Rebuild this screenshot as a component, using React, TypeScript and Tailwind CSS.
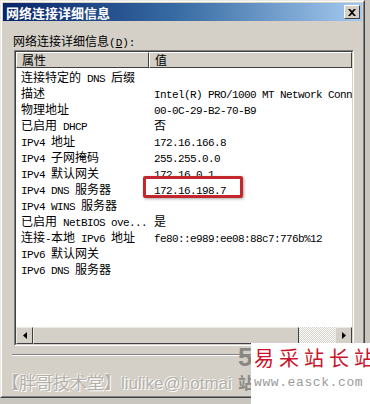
import React from "react";

const CJK = "'Noto Sans CJK SC', 'Liberation Sans', sans-serif";

function Mixed({ text }: { text: string }) {
  const parts = text.match(/[\x00-\x7F]+|[^\x00-\x7F]+/g) || [];
  return (
    <>
      {parts.map((p, i) =>
        /^[\x00-\x7F]+$/.test(p) ? (
          <span
            key={i}
            className="text-[11px] leading-[14px] tracking-[-0.6px] whitespace-pre"
            style={{ fontFamily: "'Liberation Mono', monospace" }}
          >
            {p}
          </span>
        ) : (
          <span key={i} className="text-[12px] leading-[14px] whitespace-pre" style={{ fontFamily: CJK }}>
            {p}
          </span>
        )
      )}
    </>
  );
}

const rows: [string, string][] = [
  ["连接特定的 DNS 后缀", ""],
  ["描述", "Intel(R) PRO/1000 MT Network Connection"],
  ["物理地址", "00-0C-29-B2-70-B9"],
  ["已启用 DHCP", "否"],
  ["IPv4 地址", "172.16.166.8"],
  ["IPv4 子网掩码", "255.255.0.0"],
  ["IPv4 默认网关", "172.16.0.1"],
  ["IPv4 DNS 服务器", "172.16.198.7"],
  ["IPv4 WINS 服务器", ""],
  ["已启用 NetBIOS ove...", "是"],
  ["连接-本地 IPv6 地址", "fe80::e989:ee08:88c7:776b%12"],
  ["IPv6 默认网关", ""],
  ["IPv6 DNS 服务器", ""],
];

export default function App() {
  return (
    <div className="w-[370px] h-[404px] bg-[#c9c6c0] relative overflow-hidden">
      {/* window */}
      <div className="w-[365px] h-[398px] bg-[#d4d0c8] border-l border-t border-[#ece9e2] border-r border-b border-r-[#404040] border-b-[#404040] flex flex-col">
        <div className="flex-1 flex flex-col border-l border-t border-white border-r border-b border-r-[#808080] border-b-[#808080] p-[1px]">
          {/* title bar */}
          <div className="h-[18px] flex items-center justify-between pl-[3px] pr-[2px] bg-gradient-to-r from-[#0a246a] via-[#3a6ea5] to-[#a6caf0]">
            <span className="text-white font-bold text-[13px] leading-none" style={{ fontFamily: CJK }}>
              网络连接详细信息
            </span>
            <div className="w-[16px] h-[14px] bg-[#d4d0c8] border-l border-t border-white border-r border-b border-r-[#404040] border-b-[#404040] flex items-center justify-center">
              <svg width="8" height="7" viewBox="0 0 8 7">
                <path d="M0 0h2l2 2 2-2h2L5 3.5 8 7H6L4 5 2 7H0l3-3.5z" fill="#000" />
              </svg>
            </div>
          </div>

          {/* label */}
          <div className="pl-[10px] pt-[12px] h-[29px] leading-[14px] text-black">
            <Mixed text="网络连接详细信息" />
            <span className="text-[11px] leading-[14px]" style={{ fontFamily: "'Liberation Mono', monospace" }}>
              (<span className="underline">D</span>):
            </span>
          </div>

          {/* list box */}
          <div className="ml-[11px] w-[340px] h-[296px] border-l border-t border-[#808080] border-r border-b border-r-white border-b-white">
            <div className="w-full h-full border-l border-t border-[#404040] border-r border-b border-r-[#d4d0c8] border-b-[#d4d0c8] bg-white flex flex-col relative">
              {/* header */}
              <div className="h-[16px] flex shrink-0">
                <div className="w-[133px] bg-[#d4d0c8] border-l border-t border-white border-r border-b border-r-[#404040] border-b-[#404040] pl-[5px] leading-[13px]">
                  <Mixed text="属性" />
                </div>
                <div className="flex-1 bg-[#d4d0c8] border-l border-t border-white border-r border-b border-r-[#404040] border-b-[#404040] pl-[5px] leading-[13px]">
                  <Mixed text="值" />
                </div>
              </div>
              {/* rows */}
              <div className="flex-1 overflow-hidden">
                {rows.map(([k, v], i) => (
                  <div key={i} className="h-[16px] flex items-center text-black whitespace-nowrap">
                    <div className="w-[133px] pl-[5px] overflow-hidden">
                      <Mixed text={k} />
                    </div>
                    <div className="flex-1 pl-[5px] overflow-hidden">
                      <Mixed text={v} />
                    </div>
                  </div>
                ))}
              </div>
              {/* red highlight */}
              <div className="absolute left-[127px] top-[124px] w-[100px] h-[22px] border-[3px] border-[#c4262e] rounded-[2px] shadow-[1px_1px_3px_rgba(0,0,0,0.35)]" />
              {/* h scrollbar */}
              <div className="h-[17px] flex shrink-0 bg-[#e8e6e1]">
                <div className="w-[17px] h-[17px] bg-[#d4d0c8] border-l border-t border-[#ece9e2] border-r border-b border-r-[#404040] border-b-[#404040] flex items-center justify-center">
                  <svg width="4" height="7" viewBox="0 0 4 7">
                    <path d="M4 0v7L0 3.5z" fill="#000" />
                  </svg>
                </div>
                <div className="w-[266px] h-[17px] bg-[#d4d0c8] border-l border-t border-[#ece9e2] border-r border-b border-r-[#404040] border-b-[#404040]" />
                <div
                  className="flex-1"
                  style={{
                    backgroundImage:
                      "repeating-conic-gradient(#d4d0c8 0% 25%, #ffffff 0% 50%)",
                    backgroundSize: "2px 2px",
                  }}
                />
                <div className="w-[17px] h-[17px] bg-[#d4d0c8] border-l border-t border-[#ece9e2] border-r border-b border-r-[#404040] border-b-[#404040] flex items-center justify-center">
                  <svg width="4" height="7" viewBox="0 0 4 7">
                    <path d="M0 0v7l4-3.5z" fill="#000" />
                  </svg>
                </div>
              </div>
            </div>
          </div>

          {/* separator */}
          <div className="ml-[9px] mr-[6px] mt-[8px] h-[2px] border-t border-[#808080] border-b border-b-white" />
          <div className="flex-1" />
        </div>
      </div>

      {/* watermark bottom text */}
      <div
        className="absolute left-[2px] top-[372px] text-[17px] leading-[20px] text-[#b3afa8] whitespace-nowrap"
        style={{ fontFamily: CJK, textShadow: "1px 1px 0 #ffffff, -1px -1px 0 #f0eee9" }}
      >
        【胖哥技术堂】
        <span style={{ fontFamily: "'Liberation Sans', sans-serif" }}>liulike@hotmai</span>
      </div>
      <div
        className="absolute left-[238px] top-[343px] text-[26px] font-bold leading-[28px] text-[#8a8884]"
        style={{ fontFamily: "'Liberation Sans', sans-serif" }}
      >
        5
      </div>
      <div className="absolute left-[238px] top-[372px] text-[16px] font-bold leading-[20px] text-[#8a8884]" style={{ fontFamily: CJK }}>
        站
      </div>

      {/* easck logo box */}
      <div className="absolute left-[251px] top-[343px] w-[119px] h-[61px] bg-white flex flex-col pl-[3px] pt-[3px]">
        <div className="text-[20px] leading-[24px] text-[#c8142c] tracking-[5px] whitespace-nowrap" style={{ fontFamily: "'Noto Sans CJK SC', serif" }}>
          易采站长站
        </div>
        <div
          className="mt-[5px] text-[13px] leading-[16px] text-[#9a9a9a] tracking-[0.6px] whitespace-nowrap"
          style={{ fontFamily: "'Liberation Mono', monospace" }}
        >
          www.easck.com
        </div>
      </div>
    </div>
  );
}
